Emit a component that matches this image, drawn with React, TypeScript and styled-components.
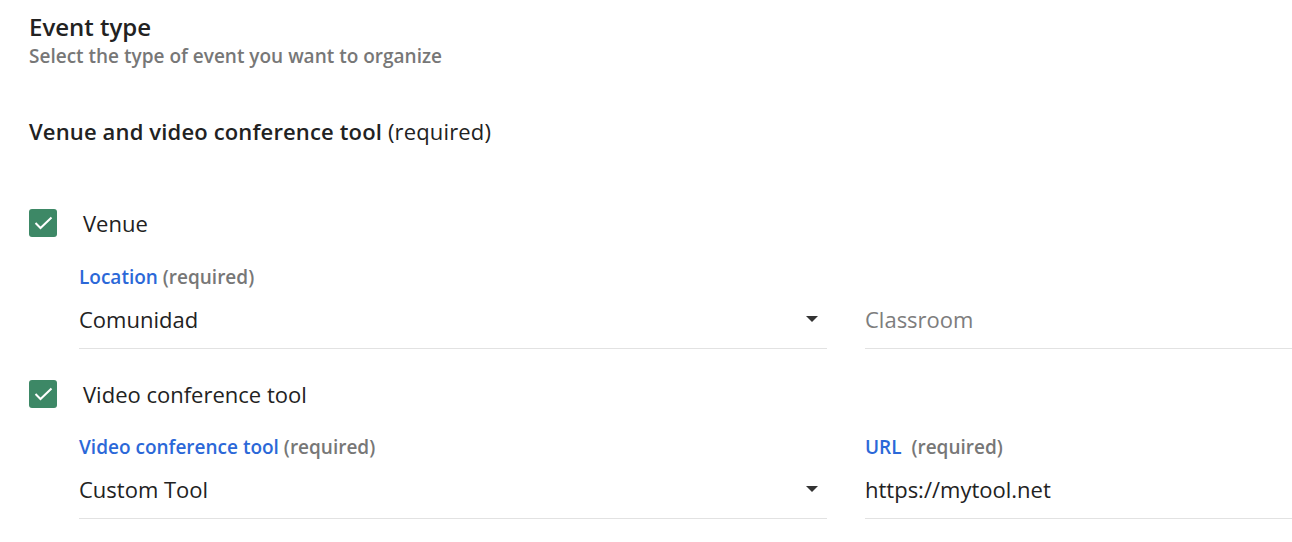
import styled, { createGlobalStyle } from "styled-components";

const GlobalStyle = createGlobalStyle`
  body {
    margin: 0;
    background: #ffffff;
    font-family: "Open Sans", "Noto Sans", sans-serif;
    color: #222222;
  }
`;

type FieldProps = {
  label: string;
  value: string;
  placeholder?: boolean;
  select?: boolean;
  spaced?: boolean;
};

function Field({ label, value, placeholder, select, spaced }: FieldProps) {
  return (
    <FieldBox>
      <FieldLabel $hidden={!label}>
        <LabelName>{label}</LabelName>
        {spaced ? "\u00a0\u00a0" : " "}
        <LabelHint>(required)</LabelHint>
      </FieldLabel>
      <InputLine>
        <InputText $placeholder={placeholder}>{value}</InputText>
        {select && (
          <svg width="12" height="6" viewBox="0 0 12 6">
            <path d="M0 0 L12 0 L6 6 Z" fill="#333" />
          </svg>
        )}
      </InputLine>
    </FieldBox>
  );
}

function CheckBox() {
  return (
    <Box>
      <svg width="19" height="14" viewBox="0 0 19 14">
        <path d="M1.5 7 L6.5 12 L17.5 1.5" fill="none" stroke="#fff" strokeWidth="2" />
      </svg>
    </Box>
  );
}

export default function App() {
  return (
    <Page>
      <GlobalStyle />
      <Title>Event type</Title>
      <Subtitle>Select the type of event you want to organize</Subtitle>
      <SectionTitle>
        <strong>Venue and video conference tool</strong> (required)
      </SectionTitle>

      <Option $top={63}>
        <CheckBox />
        <OptionText>Venue</OptionText>
      </Option>
      <FieldRow $top={27}>
        <Field label="Location" value="Comunidad" select />
        <Field label="" value="Classroom" placeholder />
      </FieldRow>

      <Option $top={31}>
        <CheckBox />
        <OptionText>Video conference tool</OptionText>
      </Option>
      <FieldRow $top={26}>
        <Field label="Video conference tool" value="Custom Tool" select />
        <Field label="URL" value="https://mytool.net" spaced />
      </FieldRow>
    </Page>
  );
}

const Page = styled.div`
  padding: 13px 0 0 29px;
`;

const Title = styled.h1`
  margin: 0;
  font-size: 24px;
  font-weight: 600;
  line-height: 28px;
  color: #222;
`;

const Subtitle = styled.p`
  margin: 2px 0 0;
  font-size: 19px;
  font-weight: 600;
  line-height: 26px;
  color: #777;
`;

const SectionTitle = styled.p`
  margin: 47px 0 0;
  font-size: 22px;
  line-height: 30px;
  font-weight: 400;
  letter-spacing: 0.15px;
  color: #222;

  strong {
    font-weight: 600;
  }
`;

const Option = styled.div<{ $top: number }>`
  display: flex;
  align-items: center;
  gap: 26px;
  margin-top: ${(p) => p.$top}px;
`;

const Box = styled.div`
  width: 28px;
  height: 28px;
  border-radius: 3px;
  background: #3d8866;
  display: flex;
  align-items: center;
  justify-content: center;
`;

const OptionText = styled.span`
  font-size: 22px;
  line-height: 28px;
  color: #222;
`;

const FieldRow = styled.div<{ $top: number }>`
  display: grid;
  grid-template-columns: 748px 1fr;
  column-gap: 38px;
  margin: ${(p) => p.$top}px 0 0 50px;
`;

const FieldBox = styled.div`
  display: flex;
  flex-direction: column;
`;

const FieldLabel = styled.div<{ $hidden?: boolean }>`
  font-size: 19px;
  font-weight: 600;
  line-height: 26px;
  height: 26px;
  visibility: ${(p) => (p.$hidden ? "hidden" : "visible")};
`;

const LabelName = styled.span`
  color: #2b68d8;
`;

const LabelHint = styled.span`
  color: #777;
`;

const InputLine = styled.div`
  display: flex;
  align-items: center;
  justify-content: space-between;
  height: 58px;
  padding-right: 9px;
  border-bottom: 1px solid #e2e2e2;
`;

const InputText = styled.span<{ $placeholder?: boolean }>`
  font-size: 22px;
  color: ${(p) => (p.$placeholder ? "#7d7d7d" : "#222")};
`;
